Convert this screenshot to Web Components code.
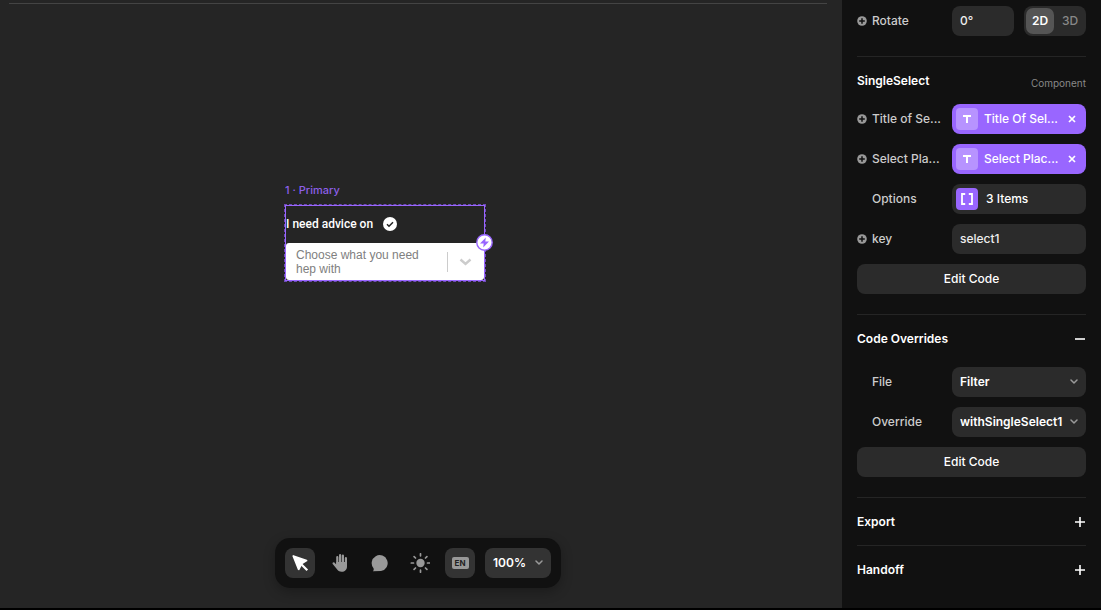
<!DOCTYPE html>
<html lang="en">
<head>
<meta charset="utf-8">
<title>Component editor</title>
<style>
  html, body { height: 100%; }
  body { margin: 0; background: #000; color: #fff; font: 500 12px/16px Inter, "Liberation Sans", sans-serif; }
</style>
</head>
<body>
<editor-app></editor-app>

<script>
const BASE = `
  *, *::before { box-sizing: border-box; }
  button, input, select { font: inherit; color: inherit; border: 0; margin: 0; padding: 0; background: none; outline-offset: 2px; }
  svg { display: block; flex: none; }
`;
const define = (name, html, setup) => customElements.define(name, class extends HTMLElement {
  connectedCallback() {
    if (this.shadowRoot) return;
    const a = n => this.getAttribute(n) || '';
    this.attachShadow({ mode: 'open' }).innerHTML = `<style>${BASE}</style>` + html(a, this);
    if (setup) setup(this);
  }
});

/* Inspector: one labelled row */
define('prop-row', (a, el) => `
  <style>
    :host { display: grid; grid-template-columns: 15px 80px minmax(0, 1fr); align-items: center; height: 30px; }
    .label { color: #ccc; white-space: nowrap; }
    .add { width: 10px; height: 10px; }
  </style>
  ${el.hasAttribute('bindable') ? `<button class="add" aria-label="Bind ${a('label')}"><svg width="10" height="10" viewBox="0 0 10 10"><circle cx="5" cy="5" r="4.8" fill="#999"/><path d="M5 2.2v5.6M2.2 5h5.6" stroke="#111" stroke-width="1.5"/></svg></button>` : '<span></span>'}
  <span class="label">${a('label')}</span>
  <slot></slot>`);

define('text-field', a => `
  <style>
    :host { display: block; min-width: 0; }
    input { display: block; width: 100%; height: 30px; padding: 0 8px 1px; border-radius: 8px; background: #2b2b2b; color: #eee; }
  </style>
  <input type="text" aria-label="${a('label')}" value="${a('value')}">`);

define('drop-down', a => `
  <style>
    :host { display: grid; min-width: 0; align-items: center; }
    select, svg { grid-area: 1 / 1; }
    select { appearance: none; width: 100%; height: 30px; padding: 0 20px 0 8px; border-radius: 8px; background: var(--field, #2b2b2b); color: #fff; font-weight: 600; }
    svg { justify-self: end; margin-right: 8px; pointer-events: none; }
  </style>
  <select aria-label="${a('label')}"><option>${a('value')}</option></select>
  <svg width="8" height="6" viewBox="0 0 8 6"><path d="M1 1l3 3 3-3" fill="none" stroke="#999" stroke-width="1.5" stroke-linecap="round" stroke-linejoin="round"/></svg>`);

define('variable-chip', a => `
  <style>
    :host { display: flex; align-items: center; height: 30px; padding: 0 8px 0 4px; border-radius: 8px; background: #9966ff; min-width: 0; }
    .type { display: grid; place-items: center; width: 22px; height: 22px; border-radius: 4px; background: #b793ff; }
    .name { flex: 1; margin-left: 6px; white-space: nowrap; }
    button { display: grid; place-items: center; width: 12px; height: 12px; }
  </style>
  <span class="type"><svg width="10" height="10" viewBox="0 0 10 10"><path d="M1 2h8M5 2V9" stroke="#fff" stroke-width="2"/></svg></span>
  <span class="name">${a('name')}</span>
  <button aria-label="Remove"><svg width="8" height="8" viewBox="0 0 8 8"><path d="M1 1l6 6M7 1L1 7" stroke="#fff" stroke-width="1.7"/></svg></button>`);

define('list-field', a => `
  <style>
    button { display: flex; align-items: center; gap: 8px; width: 100%; height: 30px; padding: 0 4px; border-radius: 8px; background: #2b2b2b; }
    .type { display: grid; place-items: center; width: 22px; height: 22px; border-radius: 4px; background: #9966ff; }
  </style>
  <button><span class="type"><svg width="12" height="12" viewBox="0 0 12 12"><path d="M4.2 1H1v10h3.2M7.8 1H11v10H7.8" fill="none" stroke="#fff" stroke-width="1.8"/></svg></span>${a('value')}</button>`);

define('mode-toggle', () => `
  <style>
    :host { display: grid; grid-template-columns: 28px 28px; padding: 2px 2px; gap: 2px; height: 30px; border-radius: 8px; background: #2b2b2b; justify-content: space-between; }
    button { border-radius: 7px; color: #888; }
    button[aria-pressed=true] { background: #555; color: #fff; font-weight: 600; }
  </style>
  <button aria-pressed="true">2D</button><button aria-pressed="false">3D</button>`,
  el => {
    const all = [...el.shadowRoot.querySelectorAll('button')];
    all.forEach(b => b.onclick = () => all.forEach(o => o.setAttribute('aria-pressed', o === b)));
  });

define('wide-button', () => `
  <style>
    button { display: block; width: 100%; height: 30px; border-radius: 8px; background: #2b2b2b; }
  </style>
  <button><slot></slot></button>`);

define('panel-section', (a, el) => `
  <style>
    :host { display: block; margin: 0 15px; }
    :host(:not(:first-of-type)) { border-top: 1px solid #252525; }
    header { display: flex; align-items: center; justify-content: space-between; height: 47px; }
    h2 { margin: 0; font: inherit; font-weight: 600; }
    small { font-size: 10px; font-weight: 400; color: #888; padding-top: 4px; }
    button { width: 12px; height: 12px; }
    .rows { display: grid; gap: 10px; padding-bottom: 20px; }
    :host([action=collapse]) .rows { padding-top: 5px; }
    :host(:first-of-type) .rows { padding-top: 6px; }
  </style>
  ${a('heading') ? `<header><h2>${a('heading')}</h2>
    ${a('note') ? `<small>${a('note')}</small>` : ''}
    ${a('action') ? `<button aria-label="${a('action')} ${a('heading')}"><svg width="12" height="12" viewBox="0 0 12 12"><path d="${a('action') === 'add' ? 'M1 6h10M6 1v10' : 'M1 6h10'}" stroke="#fff" stroke-width="1.6"/></svg></button>` : ''}</header>` : ''}
  ${el.childElementCount ? '<div class="rows"><slot></slot></div>' : ''}`);

define('inspector-panel', () => `
  <style>
    :host { display: block; background: #111; overflow: hidden; }
    .pair { display: grid; grid-template-columns: 62px 62px; justify-content: space-between; }
  </style>
  <panel-section>
    <prop-row label="Rotate" bindable><div class="pair"><text-field label="Rotate" value="0°"></text-field><mode-toggle></mode-toggle></div></prop-row>
  </panel-section>
  <panel-section heading="SingleSelect" note="Component">
    <prop-row label="Title of Se..." bindable><variable-chip name="Title Of Sel..."></variable-chip></prop-row>
    <prop-row label="Select Pla..." bindable><variable-chip name="Select Plac..."></variable-chip></prop-row>
    <prop-row label="Options"><list-field value="3 Items"></list-field></prop-row>
    <prop-row label="key" bindable><text-field label="key" value="select1"></text-field></prop-row>
    <wide-button>Edit Code</wide-button>
  </panel-section>
  <panel-section heading="Code Overrides" action="collapse">
    <prop-row label="File"><drop-down label="File" value="Filter"></drop-down></prop-row>
    <prop-row label="Override"><drop-down label="Override" value="withSingleSelect1"></drop-down></prop-row>
    <wide-button>Edit Code</wide-button>
  </panel-section>
  <panel-section heading="Export" action="add"></panel-section>
  <panel-section heading="Handoff" action="add"></panel-section>`);

/* Canvas: the selected component variant */
define('variant-frame', () => `
  <style>
    :host { display: block; width: 200px; }
    .name { color: #9966ff; font-size: 11px; opacity: .9; }
    .frame { position: relative; height: 76px; margin-top: 7px; border: 1px solid #9966ff; outline: 1px dashed #6f4cb5; }
    .title { display: flex; align-items: center; gap: 10px; height: 37px; padding-bottom: 1px; color: #fff; font-family: Roboto, sans-serif; }
    .select { display: flex; align-items: center; width: 100%; height: 37px; padding: 0 12px 0 10px; border-radius: 3px; background: #fff; color: #808080; font: 400 12px/14px "Liberation Sans", Arial, sans-serif; text-align: left; }
    .select span { flex: 1; }
    .select i { width: 1px; height: 20px; margin-right: 11px; background: #ccc; }
    .bolt { position: absolute; right: -9px; top: 28px; width: 17px; height: 17px; }
  </style>
  <div class="name">1 · Primary</div>
  <div class="frame">
    <div class="title">I need advice on
      <svg width="14" height="14" viewBox="0 0 14 14"><circle cx="7" cy="7" r="7" fill="#fff"/><path d="M4 7.2l2 2 4-4" fill="none" stroke="#222" stroke-width="1.5"/></svg>
    </div>
    <button class="select"><span>Choose what you need<br>hep with</span><i></i>
      <svg width="13" height="8" viewBox="0 0 13 8"><path d="M1.5 1.5l5 4.5 5-4.5" fill="none" stroke="#ccc" stroke-width="2.4"/></svg>
    </button>
    <button class="bolt" aria-label="Interactions"><svg width="17" height="17" viewBox="0 0 17 17"><circle cx="8.500" cy="8.500" r="7.700" fill="#fff" stroke="#9966ff" stroke-width="1.400"/><path d="M9.800 3.500L4 9.500h3.700L7.200 13.500 13 7.500H9.300z" fill="#9966ff"/></svg></button>
  </div>`);

define('canvas-toolbar', () => `
  <style>
    :host { display: flex; gap: 10px; padding: 10px; border-radius: 15px; background: #111; box-shadow: 0 4px 12px #0004; }
    button { display: grid; place-items: center; width: 30px; height: 30px; border-radius: 8px; }
    .on { background: #333; }
    drop-down { --field: #333; width: 66px; }
    .lang { width: 17px; border-radius: 2px; background: #999; color: #222; font-size: 8px; font-weight: 700; line-height: 12px; }
  </style>
  <button class="on" aria-label="Select"><svg width="20" height="20" viewBox="0 0 20 20"><path d="M3.300 3L16.500 7.600 11.700 10.500 8.700 16.300z" fill="#fff" stroke="#fff" stroke-width="1.800" stroke-linejoin="round"/><path d="M11 11l6.300 6.300" stroke="#fff" stroke-width="2.200"/></svg></button>
  <button aria-label="Pan"><svg width="20" height="20" viewBox="0 0 20 20"><path d="M7.300 12V4.200M10.100 10V2.200M12.900 10V2.700M15.900 12V5.200" stroke="#999" stroke-width="2.200" stroke-linecap="round"/><path d="M6.300 9H17v4.500c0 3.200-2.100 5.300-5.300 5.300-2.400 0-3.900-1-5.100-3L2.700 10.900c-.8-1.200.9-2.200 1.900-1.200l1.700 1.700z" fill="#999"/></svg></button>
  <button aria-label="Comment"><svg width="20" height="20" viewBox="0 0 20 20"><path d="M2.800 18.200c1-.8 1.100-1.800.7-3A8 8 0 1 1 11 18z" fill="#999"/></svg></button>
  <button aria-label="Theme"><svg width="20" height="20" viewBox="0 0 20 20"><circle cx="10.500" cy="10" r="4.200" fill="#999"/><path d="M10.500 .8v2M10.500 17.200v2M1.300 10h2.200M17.500 10h2.200M4.100 3.600L5.500 5M15.500 15l1.400 1.400M4.100 16.400L5.500 15M15.500 5l1.400-1.400" stroke="#999" stroke-width="1.700" stroke-linecap="round"/></svg></button>
  <button class="on" aria-label="Language"><span class="lang">EN</span></button>
  <drop-down label="Zoom" value="100%"></drop-down>`);

define('canvas-area', () => `
  <style>
    :host { position: relative; display: flex; flex-direction: column; justify-content: space-between; align-items: center; padding: 3px 15px 20px 9px; background: #252525; min-width: 0; }
    .edge { width: 100%; height: 1px; background: #444; }
    variant-frame { position: absolute; left: 285px; top: 182px; }
  </style>
  <div class="edge"></div>
  <variant-frame></variant-frame>
  <canvas-toolbar></canvas-toolbar>`);

define('editor-app', () => `
  <style>
    :host { display: grid; grid-template-columns: minmax(0, 1fr) 259px; height: 100vh; padding-bottom: 2px; box-sizing: border-box; overflow: hidden; }
  </style>
  <canvas-area></canvas-area>
  <inspector-panel></inspector-panel>`);
</script>
</body>
</html>
